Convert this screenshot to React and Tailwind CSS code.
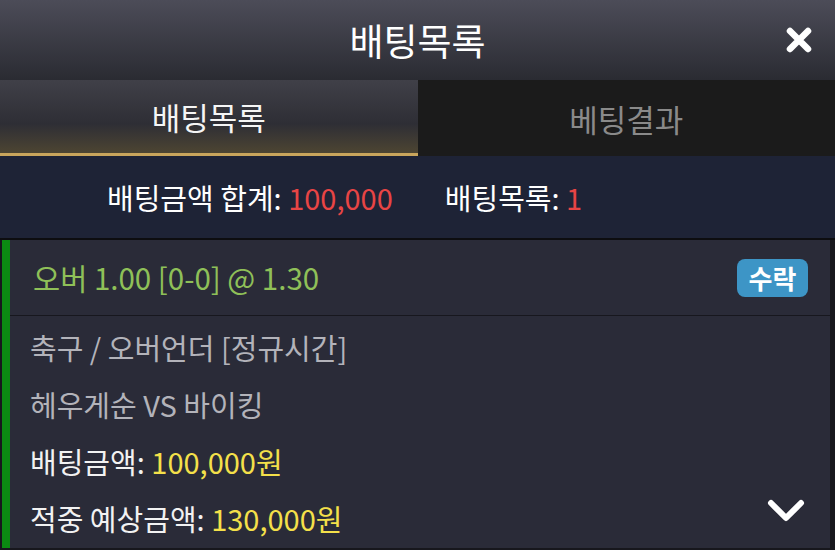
import React from "react";

const XIcon = () => (
  <svg width="26" height="26" viewBox="0 0 26 26">
    <path d="M4 4 L22 22 M22 4 L4 22" stroke="#fff" strokeWidth="6.5" strokeLinecap="round" />
  </svg>
);

const Chevron = () => (
  <svg width="40" height="26" viewBox="0 0 40 26">
    <path d="M5 5 L20 20 L35 5" stroke="#fff" strokeWidth="6" fill="none" strokeLinecap="round" strokeLinejoin="round" />
  </svg>
);

const App = () => {
  return (
    <div
      className="w-[835px] h-[550px] flex flex-col bg-[#17171d] overflow-hidden"
      style={{ fontFamily: '"Noto Sans CJK KR", "Noto Sans", sans-serif' }}
    >
      {/* header */}
      <div className="relative h-[80px] shrink-0 flex items-center justify-center bg-[linear-gradient(to_bottom,#4c4c58,#2a2b32)]">
        <p className="text-[37px] text-white leading-none">배팅목록</p>
        <div className="absolute right-[23px] top-[27px]">
          <XIcon />
        </div>
      </div>

      {/* tabs */}
      <div className="h-[76px] shrink-0 flex">
        <div className="w-1/2 flex items-center justify-center border-b-[3px] border-[#c9a55c] bg-[linear-gradient(to_bottom,#404048_0%,#2e2e35_60%,#4d4532_100%)]">
          <p className="text-[31px] text-[#f5f5f5] leading-none">배팅목록</p>
        </div>
        <div className="w-1/2 flex items-center justify-center bg-[#1b1b1b]">
          <p className="text-[31px] text-[#8a8a8a] leading-none">베팅결과</p>
        </div>
      </div>

      {/* summary */}
      <div className="h-[82px] shrink-0 flex items-center gap-[52px] pl-[107px] bg-[#1e2336] text-[29px] leading-none">
        <p className="text-white">
          배팅금액 합계: <span className="text-[#e84545]">100,000</span>
        </p>
        <p className="text-white">
          배팅목록: <span className="text-[#e84545]">1</span>
        </p>
      </div>

      <div className="h-[2px] shrink-0 bg-[#0d0d10]"></div>

      {/* bet card */}
      <div className="flex-1 ml-[2px] mr-[5px] mb-[2px] flex flex-col bg-[#2a2b38] border-l-[8px] border-[#0b8a12]">
        <div className="h-[76px] shrink-0 flex items-center justify-between pl-[23px] pr-[22px] border-b border-[#17171e]">
          <p className="text-[29.5px] text-[#8fc058] leading-none">오버 1.00 [0-0] @ 1.30</p>
          <span className="w-[71px] h-[38px] flex items-center justify-center rounded-lg bg-[#3d95c6] text-white text-[26px] font-bold leading-none">
            수락
          </span>
        </div>

        <div className="flex flex-col pt-[3px] pl-[20px] pr-[24px] text-[29px] leading-none">
          <div className="h-[57px] flex items-center text-[#b3b3ba]">축구 / 오버언더 [정규시간]</div>
          <div className="h-[57px] flex items-center text-[#b3b3ba]">헤우게순 VS 바이킹</div>
          <div className="h-[57px] flex items-center text-[#f2f2f2]">
            <p>
              배팅금액: <span className="text-[#f4e04a]">100,000원</span>
            </p>
          </div>
          <div className="h-[57px] flex items-center justify-between text-[#f2f2f2]">
            <p>
              적중 예상금액: <span className="text-[#f4e04a]">130,000원</span>
            </p>
            <div className="mb-4">
              <Chevron />
            </div>
          </div>
        </div>
      </div>
    </div>
  );
};

export default App;
